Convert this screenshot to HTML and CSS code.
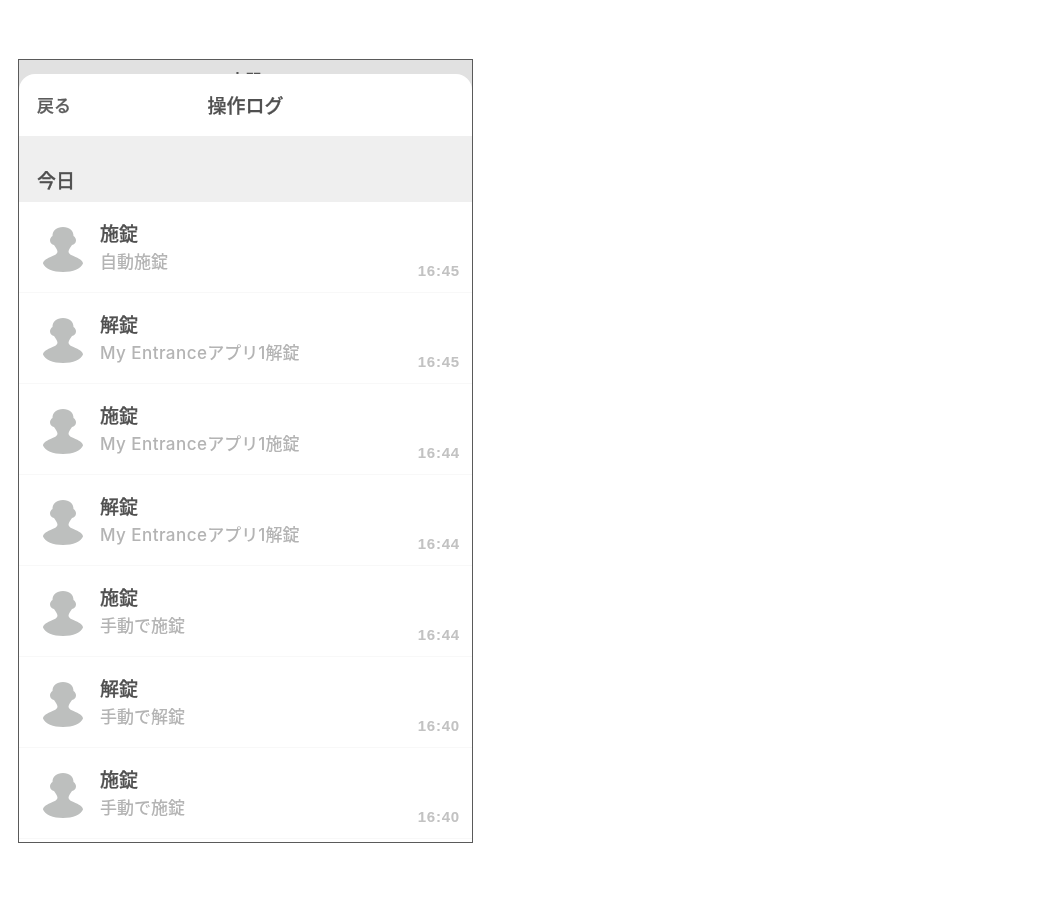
FILE: index.html
```html
<!DOCTYPE html>
<html lang="ja">
<head>
<meta charset="utf-8">
<title>操作ログ</title>
<link rel="stylesheet" href="styles.css">
</head>
<body>
<svg width="0" height="0" class="defs" aria-hidden="true">
  <symbol id="person" viewBox="0 0 40 45">
    <path d="M20 0C13.500 0 9.500 3.500 9.500 9C8 10 7 11.500 7 13.500C7 16 9 17.500 11 18C12.500 20.500 14.500 22.500 14.500 25C14 27 12 28 9.500 29C4 31.500 0 33.500 0 36.500C2 41.500 10 45 20 45C30 45 38 41.500 40 36.500C40 33.500 36 31.500 30.500 29C28 28 26 27 25.500 25C25.500 22.500 27.500 20.500 29 18C31 17.500 33 16 33 13.500C33 11.500 32 10 30.500 9C30.500 3.500 26.500 0 20 0Z"/>
  </symbol>
</svg>
<main class="frame">
  <div class="backdrop">玄関</div>
  <section class="sheet">
    <header class="nav">
      <span class="back">戻る</span>
      <h1 class="title">操作ログ</h1>
      <span></span>
    </header>
    <div class="day">今日</div>
    <ul class="log">
      <li class="row"><svg class="avatar"><use href="#person"/></svg><div class="text"><div class="action">施錠</div><div class="detail">自動施錠</div></div><time class="time">16:45</time></li>
      <li class="row"><svg class="avatar"><use href="#person"/></svg><div class="text"><div class="action">解錠</div><div class="detail"><span class="latin">My Entrance</span>アプリ1解錠</div></div><time class="time">16:45</time></li>
      <li class="row"><svg class="avatar"><use href="#person"/></svg><div class="text"><div class="action">施錠</div><div class="detail"><span class="latin">My Entrance</span>アプリ1施錠</div></div><time class="time">16:44</time></li>
      <li class="row"><svg class="avatar"><use href="#person"/></svg><div class="text"><div class="action">解錠</div><div class="detail"><span class="latin">My Entrance</span>アプリ1解錠</div></div><time class="time">16:44</time></li>
      <li class="row"><svg class="avatar"><use href="#person"/></svg><div class="text"><div class="action">施錠</div><div class="detail">手動で施錠</div></div><time class="time">16:44</time></li>
      <li class="row"><svg class="avatar"><use href="#person"/></svg><div class="text"><div class="action">解錠</div><div class="detail">手動で解錠</div></div><time class="time">16:40</time></li>
      <li class="row"><svg class="avatar"><use href="#person"/></svg><div class="text"><div class="action">施錠</div><div class="detail">手動で施錠</div></div><time class="time">16:40</time></li>
    </ul>
  </section>
</main>
</body>
</html>
```
FILE: styles.css
```css
* { box-sizing: border-box; }
html, body { margin: 0; background: #fff; }
body {
  padding: 59px 0 0 18px;
  font-family: "Inter", "Noto Sans CJK JP", sans-serif;
}
.defs { display: block; height: 0; }
.frame {
  width: 455px;
  height: 784px;
  border: 1px solid #5a5a5a;
  background: #e1e1e1;
  overflow: hidden;
}
.backdrop {
  height: 14px;
  padding-top: 8px;
  overflow: hidden;
  text-align: center;
  font-size: 16px;
  line-height: 24px;
  font-weight: 700;
  color: #555;
  filter: blur(.4px);
}
.sheet {
  background: #fff;
  border-radius: 16px 16px 0 0;
  height: 769px;
  overflow: hidden;
}
.nav {
  height: 62px;
  display: grid;
  grid-template-columns: 1fr auto 1fr;
  align-items: center;
  padding: 0 18px 2px;
}
.back {
  font-size: 17px;
  font-weight: 500;
  color: #5c5c5c;
  -webkit-text-stroke: .25px #5c5c5c;
  filter: blur(.5px);
}
.title {
  margin: 0;
  font-size: 19px;
  font-weight: 500;
  color: #505050;
  -webkit-text-stroke: .25px #505050;
  filter: blur(.5px);
}
.day {
  height: 66px;
  background: #efefef;
  padding: 32px 0 0 18px;
  font-size: 19px;
  line-height: 28px;
  font-weight: 500;
  color: #505050;
  -webkit-text-stroke: .25px #505050;
  filter: blur(.5px);
}
.log { list-style: none; margin: 0; padding: 0; }
.row {
  height: 91px;
  border-bottom: 1px solid #f8f8f8;
  display: flex;
  padding-left: 24px;
}
.avatar {
  width: 40px;
  height: 45px;
  margin-top: 25px;
  fill: #bdbfbe;
  flex: none;
  filter: blur(.6px);
}
.text { margin-left: 17px; padding-top: 19px; flex: 1; filter: blur(.5px); }
.action {
  font-size: 19px;
  line-height: 28px;
  font-weight: 500;
  color: #505050;
  -webkit-text-stroke: .25px #505050;
}
.detail {
  font-size: 17px;
  line-height: 24px;
  margin-top: 1px;
  color: #b4b4b4;
  font-weight: 500;
}
.latin { letter-spacing: .45px; }
.time {
  align-self: flex-start;
  margin: 59px 12px 0 0;
  font-family: "Liberation Sans", sans-serif;
  font-size: 15px;
  line-height: 20px;
  font-weight: 700;
  letter-spacing: .8px;
  color: #c2c2c2;
  filter: blur(.5px);
}
```
